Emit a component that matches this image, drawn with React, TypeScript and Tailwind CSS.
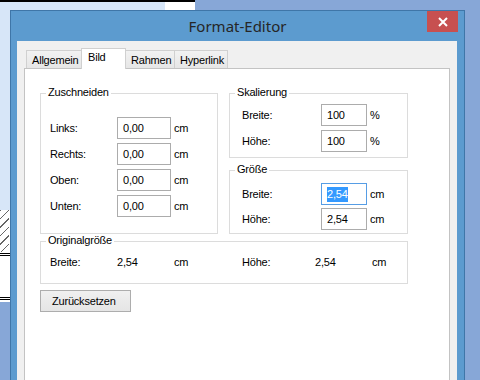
import type { ReactNode } from 'react';

function GroupBox({ title, className, children }: { title: string; className: string; children?: ReactNode }) {
  return (
    <div className={`relative border border-[#dcdcdc] ${className}`}>
      <span className="absolute left-[5px] top-[-8px] bg-white px-[2px] leading-[13px]">{title}</span>
      {children}
    </div>
  );
}

function Field({ label, value, unit, labelW, inputW, selected = false }: { label: string; value: string; unit: string; labelW: string; inputW: string; selected?: boolean }) {
  return (
    <div className="flex h-[22px] items-center">
      <span className={labelW}>{label}</span>
      <div
        className={`flex h-[22px] items-center border pl-[5px] ${inputW} ${selected ? 'border-[#569de5]' : 'border-[#acacac]'}`}
      >
        {selected ? <span className="bg-[#3399ff] leading-[15px] text-white">{value}</span> : <span>{value}</span>}
      </div>
      <span className="ml-[3px]">{unit}</span>
    </div>
  );
}

const tabs = [
  { name: 'Allgemein', w: 'w-[56px]' },
  { name: 'Bild', w: 'w-[45px]', active: true },
  { name: 'Rahmen', w: 'w-[50px]' },
  { name: 'Hyperlink', w: 'w-[54px]' },
];

export default function App() {
  return (
    <div className="relative h-[380px] w-[480px] overflow-hidden bg-[#87a7d7] font-['Liberation_Sans',Arial,sans-serif] text-[11px] tracking-[-0.2px] text-black">
      {/* document page behind the dialog */}
      <div className="absolute left-0 top-0 flex h-[302px] w-[195px] flex-col bg-white">
        <div className="h-[2px] bg-black" />
        <div className="h-[208px] w-[165px] bg-[#d7e6f8]" />
        <div className="h-[42px] w-[9px] bg-[repeating-linear-gradient(135deg,#666_0,#666_1px,transparent_1px,transparent_6px)]" />
        <div className="mt-[1px] h-[3px] border-y border-black" />
        <div className="mt-[41px] h-[3px] border-y border-black" />
      </div>

      {/* dialog window */}
      <div className="absolute left-[10px] top-[10px] flex h-[380px] w-[455px] flex-col border border-[#3f76a8] bg-[#5c9bcf]">
        <div className="relative flex h-[30px] shrink-0 items-center justify-center font-['Noto_Sans',sans-serif] text-[15px] tracking-normal text-[#262626]">
          Format-Editor
          <div className="absolute right-[6px] top-0 flex h-[21px] w-[31px] items-center justify-center bg-[#c75050]">
            <svg width="10" height="10" viewBox="0 0 10 10">
              <path d="M1 1L9 9M9 1L1 9" stroke="white" strokeWidth="2" />
            </svg>
          </div>
        </div>

        <div className="ml-[6px] mr-[7px] flex flex-1 flex-col bg-[#f0f0f0] px-[7px] pt-[7px]">
          <div className="flex h-[20px] items-end pl-[2px]">
            {tabs.map(t =>
              t.active ? (
                <div
                  key={t.name}
                  className={`relative z-10 -mb-px -ml-px h-[21px] border-x border-t border-[#d0d0d0] bg-white pl-[6px] pt-[2px] leading-[13px] ${t.w}`}
                >
                  {t.name}
                </div>
              ) : (
                <div
                  key={t.name}
                  className={`-ml-px h-[18px] border-x border-t border-[#d0d0d0] bg-gradient-to-b from-[#f2f2f2] to-[#e6e6e6] pl-[5px] pt-[3px] leading-[13px] first:ml-0 ${t.w}`}
                >
                  {t.name}
                </div>
              )
            )}
          </div>

          <div className="flex-1 border border-[#c3c3c3] bg-white pl-[15px] pt-[24px]">
            <div className="flex gap-[11px]">
              <GroupBox title="Zuschneiden" className="h-[141px] w-[178px]">
                <div className="flex flex-col gap-[4px] pl-[9px] pt-[23px]">
                  <Field label="Links:" value="0,00" unit="cm" labelW="w-[67px]" inputW="w-[54px]" />
                  <Field label="Rechts:" value="0,00" unit="cm" labelW="w-[67px]" inputW="w-[54px]" />
                  <Field label="Oben:" value="0,00" unit="cm" labelW="w-[67px]" inputW="w-[54px]" />
                  <Field label="Unten:" value="0,00" unit="cm" labelW="w-[67px]" inputW="w-[54px]" />
                </div>
              </GroupBox>

              <div className="flex flex-col gap-[12px]">
                <GroupBox title="Skalierung" className="h-[65px] w-[179px]">
                  <div className="flex flex-col gap-[4px] pl-[12px] pt-[10px]">
                    <Field label="Breite:" value="100" unit="%" labelW="w-[79px]" inputW="w-[46px]" />
                    <Field label="Höhe:" value="100" unit="%" labelW="w-[79px]" inputW="w-[46px]" />
                  </div>
                </GroupBox>
                <GroupBox title="Größe" className="h-[64px] w-[179px]">
                  <div className="flex flex-col gap-[3px] pl-[12px] pt-[12px]">
                    <Field label="Breite:" value="2,54" unit="cm" labelW="w-[79px]" inputW="w-[46px]" selected />
                    <Field label="Höhe:" value="2,54" unit="cm" labelW="w-[79px]" inputW="w-[46px]" />
                  </div>
                </GroupBox>
              </div>
            </div>

            <GroupBox title="Originalgröße" className="mt-[7px] h-[43px] w-[368px]">
              <div className="flex pl-[9px] pt-[14px] leading-[13px]">
                <span className="w-[67px]">Breite:</span>
                <span className="w-[57px]">2,54</span>
                <span className="w-[68px]">cm</span>
                <span className="w-[73px]">Höhe:</span>
                <span className="w-[57px]">2,54</span>
                <span>cm</span>
              </div>
            </GroupBox>

            <button className="mt-[6px] flex h-[22px] w-[91px] items-center border border-[#adadad] bg-gradient-to-b from-[#f0f0f0] to-[#e5e5e5] pl-[11px]">
              Zurücksetzen
            </button>
          </div>
        </div>
      </div>
    </div>
  );
}
